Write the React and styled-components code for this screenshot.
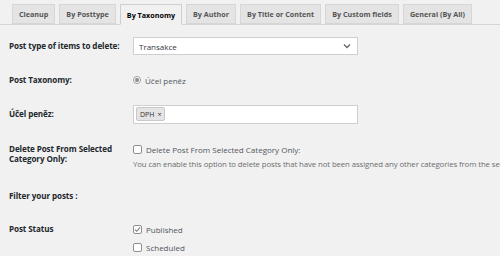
import React from "react";
import styled, { createGlobalStyle } from "styled-components";

const Global = createGlobalStyle`
  html, body { margin: 0; padding: 0; background: #f1f1f1; }
  body { font-family: "Open Sans", "DejaVu Sans", sans-serif; color: #1d2327; overflow: hidden; width: 500px; height: 256px; }
`;

const Page = styled.div`
  width: 500px;
  height: 256px;
  overflow: hidden;
  background: #f1f1f1;
`;

const TabBar = styled.div`
  display: flex;
  align-items: flex-end;
  padding: 4px 0 0 12px;
  border-bottom: 1px solid #d6d6d6;
  height: 20px;
  gap: 4px;
`;

const Tab = styled.div`
  height: ${(p) => (p.$active ? "21px" : "20px")};
  margin-bottom: ${(p) => (p.$active ? "-1px" : "0")};
  box-sizing: border-box;
  padding: 0 6px;
  display: flex;
  align-items: center;
  font-size: 7.2px;
  font-weight: 700;
  white-space: nowrap;
  flex-shrink: 0;
  color: ${(p) => (p.$active ? "#000" : "#555")};
  background: ${(p) => (p.$active ? "#f1f1f1" : "#e4e4e4")};
  border: 1px solid ${(p) => (p.$active ? "#cfcfcf" : "#d6d6d6")};
  border-bottom: ${(p) => (p.$active ? "1px solid #f1f1f1" : "1px solid #d6d6d6")};
`;

const Form = styled.div`
  display: grid;
  grid-template-columns: 124px 1fr;
  padding-left: 9px;
  margin-top: 11px;
`;

const Label = styled.div`
  font-size: 8.1px;
  font-weight: 700;
  letter-spacing: -0.1px;
  color: #23282d;
  line-height: 10px;
  height: ${(p) => p.$h}px;
  display: flex;
  align-items: ${(p) => (p.$top ? "flex-start" : "center")};
  padding-top: ${(p) => p.$pt || 0}px;
  box-sizing: border-box;
`;

const Cell = styled.div`
  height: ${(p) => p.$h}px;
  display: flex;
  flex-direction: column;
  justify-content: ${(p) => (p.$top ? "flex-start" : "center")};
  gap: ${(p) => p.$gap || 0}px;
  padding-top: ${(p) => p.$pt || 0}px;
  box-sizing: border-box;
  white-space: nowrap;
  min-width: 0;
`;

const Select = styled.div`
  width: 225px;
  height: 18px;
  box-sizing: border-box;
  background: #fff;
  border: 1px solid #cfcfcf;
  display: flex;
  align-items: center;
  justify-content: space-between;
  padding: 0 6px 0 5px;
  font-size: 8px;
  color: #32373c;
`;

const TagBox = styled.div`
  width: 225px;
  height: 19px;
  box-sizing: border-box;
  background: #fff;
  border: 1px solid #cfcfcf;
  display: flex;
  align-items: center;
  padding: 0 2px;
`;

const Tag = styled.span`
  display: inline-flex;
  align-items: center;
  gap: 3px;
  height: 12px;
  padding: 0 3px;
  background: #e4e4e4;
  border: 1px solid #c8c8c8;
  border-radius: 2px;
  font-size: 7px;
  color: #333;
`;

const Option = styled.label`
  display: flex;
  align-items: center;
  gap: 4px;
  font-size: 8px;
  color: #50575e;
  height: 10px;
`;

const Radio = styled.span`
  width: 8px;
  height: 8px;
  box-sizing: border-box;
  border-radius: 50%;
  border: 1px solid #9a9a9a;
  background: #fff;
  display: flex;
  align-items: center;
  justify-content: center;
  &::after {
    content: "";
    width: 4px;
    height: 4px;
    border-radius: 50%;
    background: #8a8a8a;
  }
`;

const Box = styled.span`
  width: 9px;
  height: 9px;
  box-sizing: border-box;
  border-radius: 2px;
  border: 1px solid #8f8f8f;
  background: #fff;
  display: flex;
  align-items: center;
  justify-content: center;
`;

const Desc = styled.div`
  font-size: 7.8px;
  letter-spacing: -0.1px;
  color: #6d6d6d;
  margin-top: 5px;
`;

const Chevron = () => (
  <svg width="8" height="6" viewBox="0 0 8 6">
    <path d="M1 1.5 L4 4.5 L7 1.5" fill="none" stroke="#666" strokeWidth="1.3" />
  </svg>
);

const Check = () => (
  <svg width="7" height="7" viewBox="0 0 7 7">
    <path d="M1 3.6 L2.8 5.3 L6 1.4" fill="none" stroke="#777" strokeWidth="1.1" />
  </svg>
);

const tabs = ["Cleanup", "By Posttype", "By Taxonomy", "By Author", "By Title or Content", "By Custom fields", "General (By All)"];

export default function App() {
  return (
    <Page>
      <Global />
      <TabBar>
        {tabs.map((t) => (
          <Tab key={t} $active={t === "By Taxonomy"}>{t}</Tab>
        ))}
      </TabBar>
      <Form>
        <Label $h={20}>Post type of items to delete:</Label>
        <Cell $h={20}>
          <Select>
            <span>Transakce</span>
            <Chevron />
          </Select>
        </Cell>

        <Label $h={48}>Post Taxonomy:</Label>
        <Cell $h={48}>
          <Option><Radio />Účel peněz</Option>
        </Cell>

        <Label $h={20}>Účel peněz:</Label>
        <Cell $h={20}>
          <TagBox>
            <Tag>DPH <span>×</span></Tag>
          </TagBox>
        </Cell>

        <Label $h={58} $top $pt={20}>Delete Post From Selected<br />Category Only:</Label>
        <Cell $h={58} $top $pt={20}>
          <Option><Box />Delete Post From Selected Category Only:</Option>
          <Desc>You can enable this option to delete posts that have not been assigned any other categories from the selected category.</Desc>
        </Cell>

        <Label $h={28}>Filter your posts :</Label>
        <Cell $h={28} />

        <Label $h={46} $top $pt={14}>Post Status</Label>
        <Cell $h={46} $top $pt={14} $gap={8}>
          <Option><Box><Check /></Box>Published</Option>
          <Option><Box />Scheduled</Option>
        </Cell>
      </Form>
    </Page>
  );
}
